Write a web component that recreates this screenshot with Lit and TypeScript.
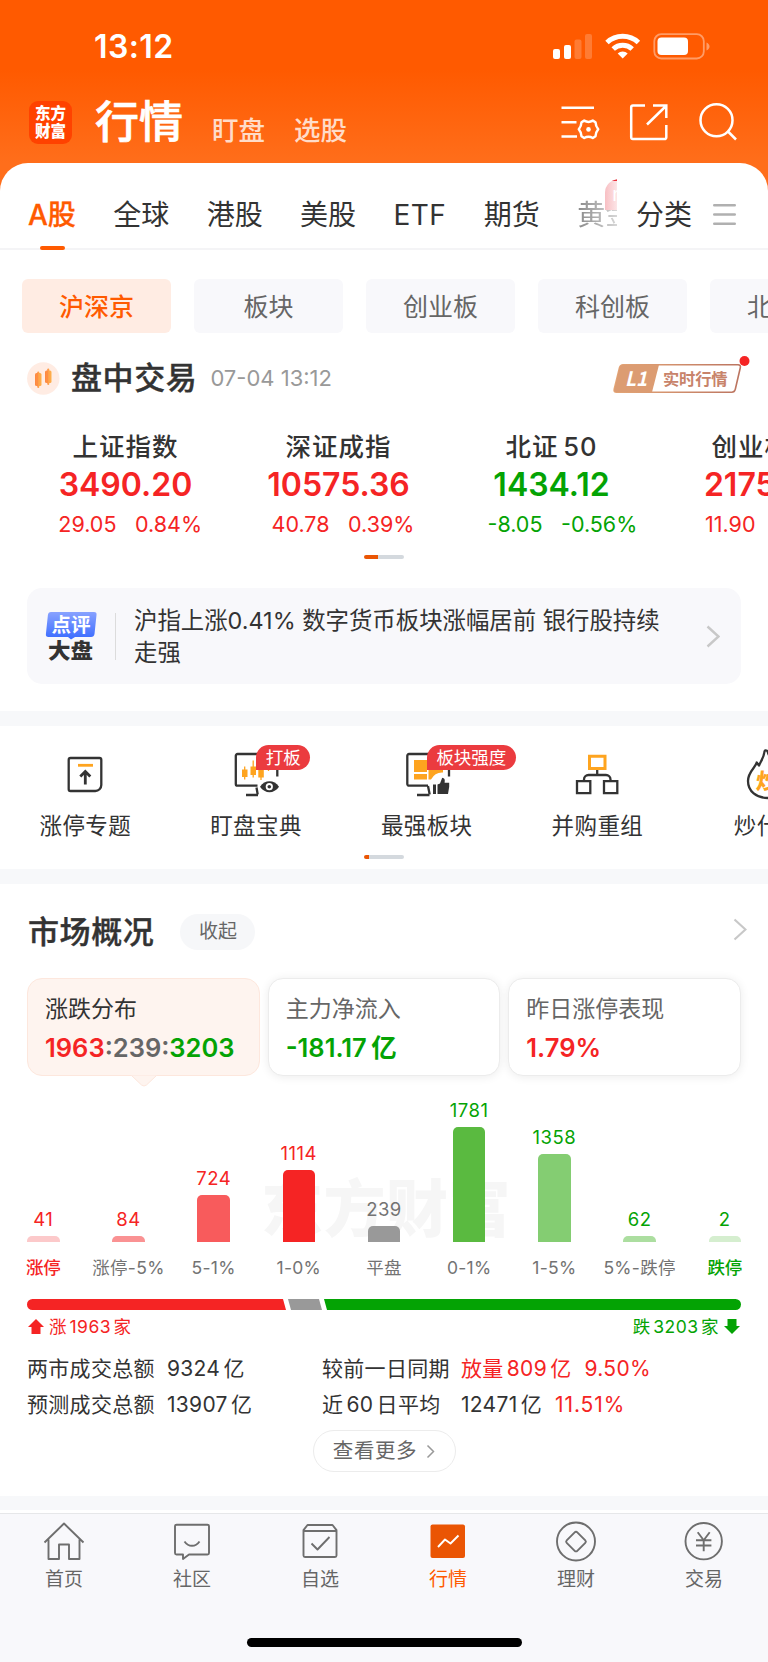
import { LitElement, html, css, svg, nothing } from "lit";
import { customElement, state } from "lit/decorators.js";
import { classMap } from "lit/directives/class-map.js";

type Tone = "up" | "down" | "flat";

const TABS = ["A股", "全球", "港股", "美股", "ETF", "期货"];
const CHIPS = ["沪深京", "板块", "创业板", "科创板", "北交所"];

const INDICES: { name: string; value: string; change: string; pct: string; tone: Tone }[] = [
  { name: "上证指数", value: "3490.20", change: "29.05", pct: "0.84%", tone: "up" },
  { name: "深证成指", value: "10575.36", change: "40.78", pct: "0.39%", tone: "up" },
  { name: "北证 50", value: "1434.12", change: "-8.05", pct: "-0.56%", tone: "down" },
  { name: "创业板指", value: "2175.66", change: "11.90", pct: "0.55%", tone: "up" },
];

const BARS: { label: string; count: number; h: number; color: string; tone: Tone; edge?: boolean }[] = [
  { label: "涨停", count: 41, h: 6, color: "#fcc9ca", tone: "up", edge: true },
  { label: "涨停-5%", count: 84, h: 6, color: "#fa9293", tone: "up" },
  { label: "5-1%", count: 724, h: 47, color: "#f85b5c", tone: "up" },
  { label: "1-0%", count: 1114, h: 72, color: "#f52424", tone: "up" },
  { label: "平盘", count: 239, h: 16, color: "#999999", tone: "flat" },
  { label: "0-1%", count: 1781, h: 115, color: "#5aba40", tone: "down" },
  { label: "1-5%", count: 1358, h: 88, color: "#84cd72", tone: "down" },
  { label: "5%-跌停", count: 62, h: 6, color: "#acdea0", tone: "down" },
  { label: "跌停", count: 2, h: 6, color: "#d5eecf", tone: "down", edge: true },
];

const dark = "#333";

const shortcutIcons = {
  limit: svg`
    <path d="M14.500 13h29a1.800 1.800 0 0 1 1.800 1.800V40a6 6 0 0 1-6 6H14.500a1.800 1.800 0 0 1-1.800-1.800V14.800A1.800 1.800 0 0 1 14.500 13z" fill="none" stroke=${dark} stroke-width="2.300"/>
    <path d="M22 20.300h15" stroke="#fea41f" stroke-width="2.800"/>
    <path d="M29.300 39.500V27M24.300 31.500l5-5 5 5" fill="none" stroke=${dark} stroke-width="2.800"/>`,
  watch: svg`
    <path d="M50.300 31.500V9H10.500a1.700 1.700 0 0 0-1.700 1.700V39a1.700 1.700 0 0 0 1.700 1.700h20M31 50h-12M29.500 42.500l1.200 7" fill="none" stroke=${dark} stroke-width="2.300"/>
    <path d="M17.700 21.500v13M26.200 15.500v17M34 20v15M41.500 18v8" stroke="#fea41f" stroke-width="1.300"/>
    <path d="M15 24.500h5.500v7.500H15zM23.500 21.500H29V30h-5.500zM31.300 23H36.800v9.500h-5.500z" fill="#fea41f"/>
    <path d="M33 41.700c5-7.300 14-7.300 19 0c-5 7.300-14 7.300-19 0z" fill=${dark}/>
    <circle cx="42.300" cy="41.700" r="3.600" fill="#fff"/><circle cx="42.300" cy="41.700" r="1.800" fill=${dark}/>`,
  strong: svg`
    <path d="M51 31.500V9H11a1.700 1.700 0 0 0-1.700 1.700V39A1.700 1.700 0 0 0 11 40.700h19M31.500 50H19M30 41l1.700 8.500" fill="none" stroke=${dark} stroke-width="2.300"/>
    <path d="M16 15h13v12H16zM16 29h13v5.500H16zM30.500 15H45v12.500q-8-.5-12 7h-2.500z" fill="#fea41f"/>
    <path d="M35 39.500h3V49h-3zM39.500 39.500l2.500-1 2.200-5.700c2.300.2 3 1.700 2.400 5h4.600v4L50 49H39.500z" fill=${dark}/>`,
  merge: svg`
    <path d="M21.500 11.300h15.500v12.200H21.500z" fill="none" stroke="#fea41f" stroke-width="3"/>
    <path d="M29.200 25v5M16 36v-1.500a4.500 4.500 0 0 1 4.500-4.500h17.500a4.500 4.500 0 0 1 4.500 4.500V36" fill="none" stroke=${dark} stroke-width="2.300"/>
    <path d="M9 36.200h13.300v12H9zM36 36.200h13.300v12H36z" fill="none" stroke=${dark} stroke-width="2.300"/>`,
  fire: svg`
    <path d="M28.500 6q-2.500-1.500-3 .5c-.5 6-3.500 9.500-5.500 14l-2.300-3c-1 5-8.700 9-8.700 18.500c0 10.500 8.500 17 20 17c12 0 20-7 20-18c0-13-17-14-20.500-29z" fill="none" stroke=${dark} stroke-width="2.300" stroke-linejoin="round"/>
    <text x="18" y="44" font-size="22" font-weight="900" fill="#fea41f" transform="skewX(-6) translate(3 0)">炒</text>`,
};

const SHORTCUTS: { label: string; icon: keyof typeof shortcutIcons; badge?: string }[] = [
  { label: "涨停专题", icon: "limit" },
  { label: "盯盘宝典", icon: "watch", badge: "打板" },
  { label: "最强板块", icon: "strong", badge: "板块强度" },
  { label: "并购重组", icon: "merge" },
  { label: "炒什么", icon: "fire" },
];

const NAV = [
  { label: "首页", icon: svg`<path d="M2.500 22.500 22 3.500l19.500 19M6.500 19.500V39h10.500V24.500h10V39h10.500V19.500"/>` },
  { label: "社区", icon: svg`<path d="M6.500 4.800h31a1.500 1.500 0 0 1 1.500 1.500V33a1.500 1.500 0 0 1-1.500 1.500H19l-6 4.500v-4.500H6.500A1.500 1.500 0 0 1 5 33V6.300a1.500 1.500 0 0 1 1.500-1.500z"/><path d="M14.500 21.500c4 5.700 11 5.700 15 0"/>` },
  { label: "自选", icon: svg`<path d="M9.500 5h25l4 5.200V35.500a1.500 1.500 0 0 1-1.500 1.500H7a1.500 1.500 0 0 1-1.500-1.500V10.200zM5.500 11h33M13.500 23.500l6 6L31.500 17"/>` },
  { label: "行情", icon: svg`<rect x="4.500" y="4.500" width="34.500" height="33.500" rx="2" fill="#ea5504" stroke="none"/><path d="M12 27l7-7.500 5.500 4L32.500 15.500" stroke="#fff"/>` },
  { label: "理财", icon: svg`<circle cx="22" cy="21.500" r="19"/><path d="M20.700 12.300a1.800 1.800 0 0 1 2.600 0l8 8a1.800 1.800 0 0 1 0 2.500l-8 8a1.800 1.800 0 0 1-2.600 0l-8-8a1.800 1.800 0 0 1 0-2.500z"/>` },
  { label: "交易", icon: svg`<circle cx="21.700" cy="21.200" r="18.200"/><path d="M15.700 12.200l6 8 6-8M21.700 20.200v11M14 20.200h15.400M14 25.500h15.400"/>` },
];

@customElement("app-root")
export class AppRoot extends LitElement {
  @state() private tab = 0;
  @state() private chip = 0;
  @state() private nav = 3;

  static styles = css`
    :host {
      display: block;
      width: 768px;
      height: 1662px;
      overflow: hidden;
      background: #fff;
      color: #333;
      font-family: Inter, "Noto Sans CJK SC", sans-serif;
      white-space: nowrap;
    }
    * { box-sizing: border-box; }
    svg { display: block; flex: none; }
    svg text { font-family: "Noto Sans CJK SC", sans-serif; }
    .up { color: #f52424; }
    .down { color: #04a304; }
    .flat { color: #737373; }

    .top { height: 191px; background: linear-gradient(#ff5a00 70px, #ff6e1b 163px); color: #fff; }
    .status { display: flex; height: 92px; align-items: center; padding: 0 58px 0 94px; }
    .clock { flex: 1; font-size: 32px; font-weight: 600; letter-spacing: 0.4px; line-height: 40px; padding-top: 1px; }
    .header { display: flex; height: 71px; padding: 9px 29px 0 29px; }
    .logo { width: 43px; height: 43px; border-radius: 9px; background: #ff4200; font-size: 15.500px; line-height: 18px; font-weight: 900; text-align: center; padding-top: 3.500px; margin-right: 23px; }
    .title { font-size: 44px; line-height: 44px; font-weight: 500; -webkit-text-stroke: .7px #fff; margin: -1.500px 29px 0 0; }
    .sub { font-size: 26.500px; line-height: 30px; font-weight: 500; color: #ffdcc8; margin: 14px 29px 0 0; }
    .tools { margin: -1px 0 0 auto; }

    .sheet { margin-top: -28px; height: 87px; background: #fff; border-radius: 28px 28px 0 0; border-bottom: 2px solid #f4f4f6; display: flex; position: relative; padding: 34px 32px 0 28px; font-size: 28px; line-height: 36px; }
    .tabs { display: flex; width: 589px; height: 73px; flex: none; overflow: hidden; margin-top: -20px; padding-top: 20px; gap: 37.400px; }
    .tab { position: relative; height: 53px; flex: none; }
    .tab:nth-child(5) { letter-spacing: .5px; }
    .tab.on { color: #ff5a00; font-weight: 500; -webkit-text-stroke: .3px #ff5a00; }
    .tab.on::after { content: ""; position: absolute; left: 12px; top: 49px; width: 25px; height: 4px; border-radius: 2px; background: #ff5a00; }
    .faded { color: #888; -webkit-mask-image: linear-gradient(90deg, #000, rgba(0,0,0,.3) 42px); }
    .new { position: absolute; left: 28px; top: -18px; width: 40px; height: 31px; padding-left: 7px; border-radius: 14px 14px 14px 0; background: linear-gradient(#e8303c 2px, transparent 2.500px), linear-gradient(90deg, #f8bfc3, #fdeced 14px); color: #fff; font-size: 19px; line-height: 31px; }
    .all { margin-left: 19px; }
    .menu { margin: 6px 0 0 auto; }

    .chips { display: flex; gap: 23px; padding: 29px 0 0 22px; height: 84px; }
    .chip { flex: none; width: 149px; height: 54px; border-radius: 6px; background: #f8f8fb; color: #666; font-size: 25px; line-height: 56px; text-align: center; }
    .chip.on { background: #ffece3; color: #ff5a00; font-weight: 500; }

    .session { display: flex; height: 60px; margin-top: 14px; padding: 0 18px 0 27px; align-items: center; position: relative; }
    .session h2, .overview h2 { margin: 0; font-size: 31px; line-height: 40px; font-weight: 500; letter-spacing: .6px; -webkit-text-stroke: .4px #333; }
    .session h2 { margin-left: 11px; }
    .date { color: #999; font-size: 22px; line-height: 30px; margin-left: 13px; }
    .level { margin: -7px 0 0 auto; }
    .level text { font-weight: 700; }

    .indices { display: flex; width: 852px; margin-left: 19px; padding-top: 20px; height: 147px; }
    .index { width: 213px; flex: none; text-align: center; }
    .name { font-size: 25.500px; line-height: 37px; font-weight: 500; letter-spacing: 1px; word-spacing: -3px; }
    .value { font-size: 32px; line-height: 40px; font-weight: 600; }
    .delta { display: grid; grid-template-columns: 97.500px 1fr; column-gap: 18.500px; font-size: 21.500px; line-height: 38px; }
    .delta span:first-child { text-align: right; }
    .delta span:last-child { text-align: left; }
    .pager { width: 40px; height: 4px; border-radius: 2px; margin: 0 auto; background: linear-gradient(90deg, #ea5504 var(--p), #d4d9de var(--p)); }
    .p1 { --p: 14px; }
    .p2 { --p: 5px; }

    .review { display: flex; align-items: center; margin: 29px 27px 27px; height: 96px; border-radius: 15px; background: #f8f8fb; padding: 0 21px 0 18px; }
    .review p { margin: 2px auto 0 18px; width: 532px; font-size: 23.400px; line-height: 32.500px; white-space: normal; color: #333; }
    .rule { width: 1px; height: 47px; background: #dcdcdc; margin-left: 18px; }
    .band { height: 15px; background: #f7f8fa; }
    .b2 { margin-top: 10px; }
    .b3 { height: 14px; }

    .shortcuts { display: flex; width: 854px; height: 129px; padding-top: 14px; }
    .shortcut { width: 170.700px; flex: none; position: relative; display: flex; flex-direction: column; align-items: center; font-size: 22.500px; line-height: 32px; letter-spacing: .4px; }
    .shortcut svg { margin: 4.500px 0 5.500px; }
    .badge { position: absolute; left: 85.500px; top: 4.500px; height: 25px; padding: 0 9.500px; border-radius: 13px 13px 13px 0; background: #eb3b3f; color: #fff; font-size: 17.500px; line-height: 25px; letter-spacing: 0; }

    .overview { display: flex; align-items: center; height: 94px; padding: 2px 21px 0 28px; }
    .overview svg { margin-bottom: 5px; }
    .fold { width: 75px; height: 36px; border-radius: 18px; background: #f6f7f9; color: #666; font-size: 19px; line-height: 36px; text-align: center; margin: 0 auto 0 26px; }
    .cards { display: grid; grid-template-columns: repeat(3, 1fr); gap: 8px; margin: 0 27px; height: 98px; }
    .card { position: relative; height: 98px; border-radius: 15px; border: 1px solid #ececec; background: #fff; box-shadow: 0 1px 10px rgba(0,0,0,.08); padding: 15px 17px 0; font-size: 23px; line-height: 30px; color: #666; }
    .card.on { background: #fef4ef; border-color: #fde7dd; box-shadow: none; color: #333; }
    .notch { position: absolute; left: 102px; top: 95px; }
    .fig { font-size: 25.500px; line-height: 34px; font-weight: 600; margin-top: 7px; word-spacing: -2px; }
    .mid { color: #666; }

    .chart { position: relative; display: flex; justify-content: space-between; height: 166px; align-items: flex-end; margin: 0 27px; }
    .mark { position: absolute; left: 234px; top: 92px; font-size: 62px; line-height: 84px; font-weight: 900; color: #f6f6f6; letter-spacing: .5px; }
    .col { width: 32.500px; display: flex; flex-direction: column; align-items: center; position: relative; font-size: 18.500px; line-height: 24px; letter-spacing: .5px; }
    .col b { font-weight: 400; margin-bottom: 5px; }
    .bar { width: 32.500px; border-radius: 5px 5px 0 0; }
    .axis { display: flex; justify-content: space-between; margin: 12px 27px 0; height: 45px; }
    .tick { width: 32.500px; display: flex; justify-content: center; font-size: 17.500px; line-height: 27px; color: #737373; letter-spacing: .3px; }
    .tick.edge { font-weight: 500; letter-spacing: -.3px; }
    .tick.up { color: #f52424; }
    .tick.down { color: #04a304; }
    .ratio { margin-left: 27px; }
    .counts { display: flex; align-items: center; height: 32px; padding: 1px 28px 0; font-size: 17.500px; line-height: 22px; letter-spacing: .5px; word-spacing: -3px; }
    .counts span { margin: 0 0 0 5px; }
    .counts .down { margin: 0 5px 0 auto; }
    .stats { display: grid; grid-template-columns: 140px 155px 139px auto; height: 73px; margin: 8px 0 0 27px; padding-top: 1px; font-size: 21px; line-height: 36px; letter-spacing: .3px; word-spacing: -3px; justify-content: start; }
    .stats i { font-style: normal; margin-left: 13px; }
    .stats .wide { letter-spacing: .9px; }
    .more { display: flex; align-items: center; justify-content: center; gap: 9px; width: 143px; height: 42px; border: 1.500px solid #ececec; border-radius: 21px; margin: 7px auto 24px; font-size: 20.500px; line-height: 40px; color: #666; letter-spacing: .6px; }
    .nav { margin-top: 3px; border-top: 1px solid #e6e7e9; background: #f8f8fb; height: 149px; position: relative; display: flex; padding-top: 6px; }
    .item { width: 128px; display: flex; flex-direction: column; align-items: center; font-size: 19px; line-height: 29px; color: #666; }
    .item svg { fill: none; stroke: #6e6e6e; stroke-width: 1.900; stroke-linejoin: round; }
    .item.on { color: #ff5a00; }
    .handle { position: absolute; left: 247px; top: 124px; width: 275px; height: 9px; border-radius: 5px; background: #000; }
  `;

  private chevron(w: number, h: number, color: string, sw: number) {
    return html`<svg width=${w} height=${h} viewBox="0 0 ${w} ${h}" fill="none" stroke=${color} stroke-width=${sw}><path d="M1.500 1.500 ${w - 1.5} ${h / 2} 1.500 ${h - 1.5}" /></svg>`;
  }

  private renderTop() {
    return html`
      <div class="top">
        <div class="status">
          <span class="clock">13:12</span>
          <svg width="158" height="28" viewBox="552 31 158 28">
            <g fill="#fff">
              <rect x="553" y="48" width="7" height="10" rx="2"/><rect x="564" y="44" width="7" height="14" rx="2"/>
              <rect x="574.500" y="38.500" width="7" height="19.500" rx="2" opacity=".2"/><rect x="585" y="33" width="7" height="25" rx="2" opacity=".2"/>
              <rect x="657.500" y="36.500" width="30.500" height="17.500" rx="4"/>
              <path d="M706.500 41.500v8c4-1.500 4-6.500 0-8z" opacity=".4"/>
              <path d="M622.700 57.500l-5-5a7.500 7.500 0 0 1 10 0z"/>
            </g>
            <rect x="654.300" y="33.200" width="49.500" height="24.300" rx="7" fill="none" stroke="#fff" stroke-width="1.800" opacity=".4"/>
            <path d="M607 41.500a23 23 0 0 1 31.400 0M613.200 48a14 14 0 0 1 19 0" fill="none" stroke="#fff" stroke-width="5"/>
          </svg>
        </div>
        <div class="header">
          <div class="logo">东方<br />财富</div>
          <div class="title">行情</div><div class="sub">盯盘</div><div class="sub">选股</div>
          <div class="tools">
            <svg width="180" height="44" viewBox="559 100 180 44" fill="none" stroke="#fff" stroke-width="2.500">
              <path d="M561.500 107.800h32.500M561.500 122.200h15M561.500 136.500h15.500"/>
              <path d="M584.200 120.600q4.300 2.600 8.600 0l2.700 1.700q.2 4 2.700 7q-2.500 3-2.700 7l-2.700 1.700q-4.300-2.600-8.600 0l-2.700-1.700q-.2-4-2.700-7q2.500-3 2.700-7z" stroke-linejoin="round"/>
              <circle cx="588.500" cy="129.400" r="2.300" fill="#fff" stroke="none"/>
              <path d="M645 105.500h-12a1.800 1.800 0 0 0-1.800 1.800v30a1.800 1.800 0 0 0 1.800 1.800h31.500a1.800 1.800 0 0 0 1.800-1.800V125M653 105.500h13.300V118M666 106l-19 18.500"/>
              <circle cx="716.500" cy="120.200" r="16"/><path d="M728 131.500l8 8"/>
            </svg>
          </div>
        </div>
      </div>
      <div class="sheet">
        <div class="tabs">
          ${TABS.map((t, i) => html`<div class=${classMap({ tab: true, on: i === this.tab })} @click=${() => (this.tab = i)}>${t}</div>`)}
          <div class="tab"><div class="faded">黄金</div><span class="new">new</span></div>
        </div>
        <span class="all">分类</span>
        <svg class="menu" width="23" height="23" viewBox="0 0 23 23" stroke="#b0b0b0" stroke-width="2.400"><path d="M1.200 2.200h20.600M1.200 11.500h20.600M1.200 20.800h20.600" stroke-linecap="round"/></svg>
      </div>`;
  }

  private renderIndices() {
    return html`
      <div class="chips">
        ${CHIPS.map((c, i) => html`<div class=${classMap({ chip: true, on: i === this.chip })} @click=${() => (this.chip = i)}>${c}</div>`)}
      </div>
      <div class="session">
        <svg width="33" height="33" viewBox="0 0 33 33">
          <defs><linearGradient id="c" x2="1"><stop stop-color="#fe8540"/><stop offset="1" stop-color="#feb24c"/></linearGradient></defs>
          <circle cx="16.300" cy="16.500" r="16.200" fill="#ffece3"/>
          <g fill="url(#c)"><rect x="8" y="11" width="6.500" height="13" rx="1.500"/><rect x="10.300" y="9.500" width="2" height="16.500" rx="1"/><rect x="18" y="8.500" width="6.500" height="12.500" rx="1.500"/><rect x="20.300" y="6.500" width="2" height="16.500" rx="1"/></g>
        </svg>
        <h2>盘中交易</h2>
        <span class="date">07-04 13:12</span>
        <svg class="level" width="138" height="40" viewBox="612 354 138 40">
          <defs><linearGradient id="g" x2="1"><stop stop-color="#e6a878"/><stop offset="1" stop-color="#bb7460"/></linearGradient></defs>
          <path d="M623 363.700h115q3 0 2.300 3l-5 21.500q-.8 3-3.500 3H616.500q-3 0-2.300-3l5.300-21.500q.8-3 3.500-3z" fill="#fff" stroke="url(#g)" stroke-width="1.600"/>
          <path d="M623 363.700h36l-7 27.500h-35.500q-3 0-2.300-3l5.300-21.500q.8-3 3.500-3z" fill="#dc9c72"/>
          <text x="625" y="385" font-size="20" fill="#fff" font-style="italic" textLength="22" lengthAdjust="spacingAndGlyphs">L1</text>
          <text x="663" y="383.500" font-size="16.300" fill="#c8836a" textLength="64.500">实时行情</text>
          <circle cx="744.500" cy="360" r="5" fill="#f52424"/>
        </svg>
      </div>
      <div class="indices">
        ${INDICES.map((x) => html`<div class="index">
          <div class="name">${x.name}</div>
          <div class="value ${x.tone}">${x.value}</div>
          <div class="delta ${x.tone}"><span>${x.change}</span><span>${x.pct}</span></div>
        </div>`)}
      </div>
      <div class="pager p1"></div>
      <div class="review">
        <svg width="52" height="50" viewBox="45 612 52 50">
          <defs><linearGradient id="b" y2="1" x2="0"><stop stop-color="#88a2ff"/><stop offset="1" stop-color="#3a6bff"/></linearGradient></defs>
          <path d="M51 613h43q3 0 2.500 3l-2 19q-.5 3-3.500 3H75l-4 2.500-3-2.500H48.500q-3 0-2.600-3l2-19q.4-3 3.100-3z" fill="url(#b)"/>
          <text x="51.500" y="633" font-size="19.500" font-weight="700" fill="#fff" textLength="39">点评</text>
          <text x="48" y="658.500" font-size="21" font-weight="900" fill="#333" textLength="45" lengthAdjust="spacingAndGlyphs">大盘</text>
        </svg>
        <div class="rule"></div>
        <p>沪指上涨0.41% 数字货币板块涨幅居前 银行股持续走强</p>
        ${this.chevron(14, 23, "#c8c8c8", 2.4)}
      </div>`;
  }

  private renderOverview() {
    return html`
      <div class="overview"><h2>市场概况</h2><span class="fold">收起</span>${this.chevron(14, 23, "#c8c8c8", 2.2)}</div>
      <div class="cards">
        <div class="card on">涨跌分布
          <div class="fig"><span class="up">1963</span><span class="mid">:239:</span><span class="down">3203</span></div>
          <svg class="notch" width="28" height="13" viewBox="0 0 28 13"><path d="M1 1.500 11.500 11q2.500 2 5 0L27 1.500z" fill="#fef4ef"/><path d="M1.500 1.500 11.500 11q2.500 2 5 0L26.500 1.500" fill="none" stroke="#fde7dd"/></svg>
        </div>
        <div class="card">主力净流入<div class="fig down">-181.17 亿</div></div>
        <div class="card">昨日涨停表现<div class="fig up">1.79%</div></div>
      </div>
      <div class="chart">
        <div class="mark">东方财富</div>
        ${BARS.map((b) => html`<div class="col ${b.tone}"><b>${b.count}</b><div class="bar" style="height:${b.h}px;background:${b.color}"></div></div>`)}
      </div>
      <div class="axis">${BARS.map((b) => html`<div class="tick ${b.edge ? `edge ${b.tone}` : ""}">${b.label}</div>`)}</div>
      <svg class="ratio" width="714" height="11" viewBox="0 0 714 11">
        <path d="M5.500 0H256l3 11H5.500a5.500 5.500 0 0 1 0-11z" fill="#f52424"/><path d="M261 0h31l3 11h-31z" fill="#999"/><path d="M297 0h411.500a5.500 5.500 0 0 1 0 11H300z" fill="#04a304"/>
      </svg>
      <div class="counts">
        <svg width="16" height="15" viewBox="0 0 16 15"><path d="M8 0l8 8h-3.500v7h-9V8H0z" fill="#f52424"/></svg><span class="up">涨 1963 家</span>
        <span class="down">跌 3203 家</span><svg width="16" height="15" viewBox="0 0 16 15"><path d="M8 15l8-8h-3.500V0h-9v7H0z" fill="#04a304"/></svg>
      </div>
      <div class="stats">
        <span>两市成交总额</span><span>9324 亿</span><span>较前一日同期</span><span class="up">放量 809 亿<i>9.50%</i></span>
        <span>预测成交总额</span><span>13907 亿</span><span>近 60 日平均</span><span>12471 亿<i class="up wide">11.51%</i></span>
      </div>
      <div class="more">查看更多${this.chevron(9, 15, "#999", 1.5)}</div>`;
  }

  render() {
    return html`
      ${this.renderTop()} ${this.renderIndices()}
      <div class="band"></div>
      <div class="shortcuts">
        ${SHORTCUTS.map((s) => html`<div class="shortcut">
          <svg width="58" height="60" viewBox="0 0 58 60">${shortcutIcons[s.icon]}</svg><span>${s.label}</span>
          ${s.badge ? html`<span class="badge">${s.badge}</span>` : nothing}
        </div>`)}
      </div>
      <div class="pager p2"></div>
      <div class="band b2"></div>
      ${this.renderOverview()}
      <div class="band b3"></div>
      <div class="nav">
        ${NAV.map((n, i) => html`<div class=${classMap({ item: true, on: i === this.nav })} @click=${() => (this.nav = i)}>
          <svg width="44" height="45" viewBox="0 0 44 45">${n.icon}</svg>${n.label}
        </div>`)}
        <div class="handle"></div>
      </div>`;
  }
}
